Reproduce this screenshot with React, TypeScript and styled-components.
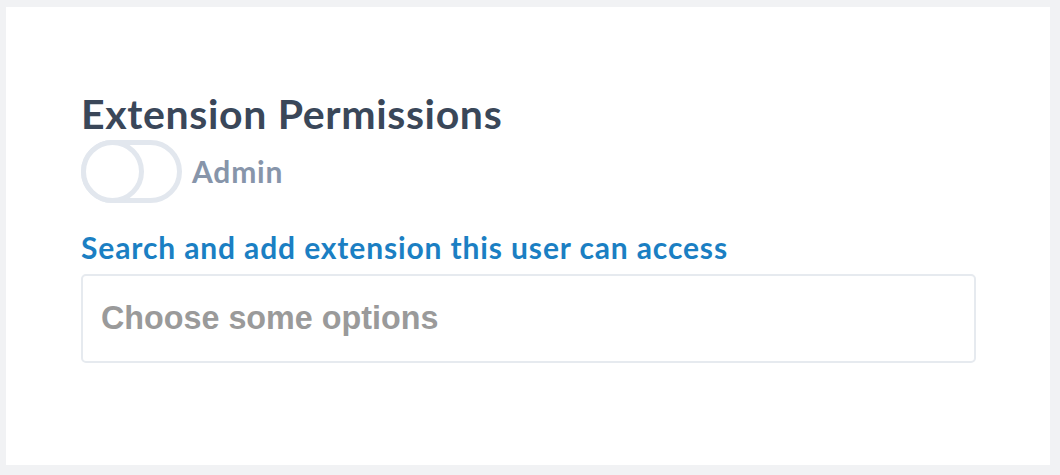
import React, { FC, useState } from 'react';
import styled, { createGlobalStyle } from 'styled-components';

const GlobalStyle = createGlobalStyle`
  html, body {
    margin: 0;
    padding: 0;
    background: #f1f2f4;
  }
  body {
    padding: 7px 10px 10px 6px;
    font-family: Lato, "Open Sans", sans-serif;
  }
`

const Card = styled.div`
  background: #ffffff;
  height: 458px;
  box-sizing: border-box;
  padding: 83px 74px 0 75px;
  display: flex;
  flex-direction: column;
`

const Title = styled.h2`
  margin: 0;
  font-size: 41px;
  line-height: 48px;
  font-weight: 700;
  color: #3a4759;
  letter-spacing: 0.65px;
`

const ToggleRow = styled.label`
  display: flex;
  align-items: center;
  gap: 10px;
  margin-top: 2px;
  cursor: pointer;
`

const Track = styled.span<{ $on: boolean }>`
  position: relative;
  display: block;
  width: 101px;
  height: 63px;
  box-sizing: border-box;
  border: 5px solid #e2e7ee;
  border-radius: 32px;
  background: ${p => (p.$on ? '#1c7fc4' : '#ffffff')};
`

const Knob = styled.span<{ $on: boolean }>`
  position: absolute;
  top: -5px;
  left: ${p => (p.$on ? '33px' : '-5px')};
  width: 63px;
  height: 63px;
  box-sizing: border-box;
  border: 5px solid #e2e7ee;
  border-radius: 50%;
  background: #ffffff;
`

const ToggleText = styled.span`
  font-size: 30px;
  font-weight: 700;
  color: #8795aa;
  letter-spacing: 0.8px;
  margin-top: -1px;
`

const FieldLabel = styled.div`
  margin-top: 26px;
  font-size: 30px;
  line-height: 36px;
  font-weight: 700;
  color: #1b7fc3;
  letter-spacing: 0.87px;
`

const Select = styled.div`
  margin-top: 9px;
  height: 89px;
  box-sizing: border-box;
  border: 2px solid #e6eaef;
  border-radius: 5px;
  padding: 0 18px;
  display: flex;
  align-items: center;
`

const Placeholder = styled.span`
  font-family: "Liberation Sans", Arial, sans-serif;
  font-size: 32.3px;
  font-weight: 700;
  color: #9a9a9a;
`

const App: FC = () => {
  const [admin, setAdmin] = useState(false);
  return (
    <>
      <GlobalStyle />
      <Card>
        <Title>Extension Permissions</Title>
        <ToggleRow onClick={() => setAdmin(!admin)}>
          <Track $on={admin}>
            <Knob $on={admin} />
          </Track>
          <ToggleText>Admin</ToggleText>
        </ToggleRow>
        <FieldLabel>Search and add extension this user can access</FieldLabel>
        <Select>
          <Placeholder>Choose some options</Placeholder>
        </Select>
      </Card>
    </>
  );
};

export default App;
